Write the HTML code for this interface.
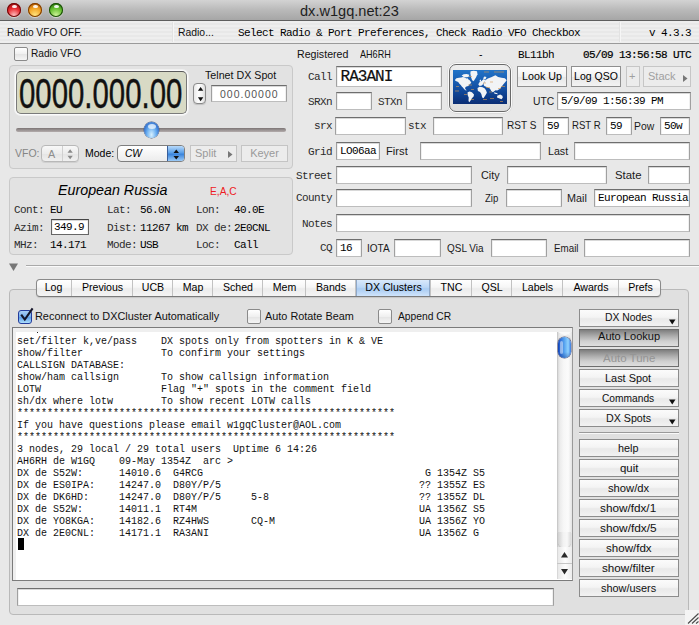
<!DOCTYPE html><html><head><meta charset="utf-8"><style>
*{margin:0;padding:0;box-sizing:border-box}
html,body{width:699px;height:625px;overflow:hidden;background:#e8e8e8;position:relative;font-family:"Liberation Sans",sans-serif;color:#000}
div{position:absolute}
.t{white-space:pre;line-height:14px;font-size:11px}
.m{font-family:"Liberation Mono",monospace;font-size:11px;letter-spacing:-0.6px}
.lbl{color:#2b2b2b}
.fld{background:#fff;border:1px solid #a0a0a0;border-top-color:#6e6e6e;border-bottom-color:#bdbdbd;box-shadow:inset 0 1px 0 #d8d8d8,inset 1px 0 0 #f0f0f0,inset -1px 0 0 #f0f0f0}
.grp{background:#e2e2e2;border:1px solid #c9c9c9;border-radius:4px}
.btn{background:linear-gradient(#ffffff,#f1f1f1 50%,#e6e6e6 51%,#f3f3f3);border:1px solid #8f8f8f;text-align:center}
.sbtn{background:linear-gradient(#fbfbfb,#f4f4f4 45%,#e9e9e9 55%,#f2f2f2);border:1px solid #8c8c8c;text-align:center}
.on{background:linear-gradient(#7e7e7e,#a9a9a9 35%,#cfcfcf 70%,#dedede);border:1px solid #6e6e6e}
.cb{background:linear-gradient(#fff,#f0f0f0 50%,#e4e4e4 51%,#f5f5f5);border:1px solid #8a8a8a;border-radius:2px}
</style></head><body>
<div class="" style="left:0px;top:0px;width:699px;height:21px;background:linear-gradient(#d3d3d3,#b9b9b9 50%,#a6a6a6);border-bottom:1px solid #5e5e5e"></div>
<div style="left:7px;top:3px;width:14px;height:14px;border-radius:50%;background:radial-gradient(circle at 50% 88%,#ffc0c0 0,#e82a30 50%,#a01010 85%);box-shadow:inset 0 0 0 1px #6a0808,0 1px 1px rgba(255,255,255,0.55)"><div style="left:4.5px;top:1.5px;width:5px;height:3.5px;border-radius:50%;background:rgba(255,255,255,0.9)"></div></div>
<div style="left:28px;top:3px;width:14px;height:14px;border-radius:50%;background:radial-gradient(circle at 50% 88%,#ffe680 0,#f3a526 50%,#b65a00 85%);box-shadow:inset 0 0 0 1px #7a3a00,0 1px 1px rgba(255,255,255,0.55)"><div style="left:4.5px;top:1.5px;width:5px;height:3.5px;border-radius:50%;background:rgba(255,255,255,0.9)"></div></div>
<div style="left:49px;top:3px;width:14px;height:14px;border-radius:50%;background:radial-gradient(circle at 50% 88%,#d0f59a 0,#66c030 50%,#2a7a10 85%);box-shadow:inset 0 0 0 1px #1a4a08,0 1px 1px rgba(255,255,255,0.55)"><div style="left:4.5px;top:1.5px;width:5px;height:3.5px;border-radius:50%;background:rgba(255,255,255,0.9)"></div></div>
<div class="t fit" style="left:299.59px;top:1.40px;line-height:20px;font-size:14px;color:#1e1e1e;transform:scaleX(1.0404);transform-origin:0 0;">dx.w1gq.net:23</div>
<div class="" style="left:0px;top:21px;width:699px;height:23px;background:repeating-linear-gradient(#eeeeee 0 2px,#e8e8e8 2px 4px);border-bottom:1px solid #9a9a9a"></div>
<div class="" style="left:172px;top:22px;width:1px;height:20px;background:#e2e2e2;box-shadow:1px 0 0 #f6f6f6"></div>
<div class="" style="left:619px;top:22px;width:1px;height:20px;background:#e2e2e2;box-shadow:1px 0 0 #f6f6f6"></div>
<div class="t fit" style="left:7.26px;top:22.00px;line-height:20px;font-size:10.8px;color:#111;transform:scaleX(0.9410);transform-origin:0 0;">Radio VFO OFF.</div>
<div class="t fit" style="left:177.85px;top:22.40px;line-height:20px;font-size:10.8px;color:#111;transform:scaleX(0.9622);transform-origin:0 0;">Radio...</div>
<div class="t m" style="left:238px;top:26px;">Select Radio &amp; Port Preferences, Check Radio VFO Checkbox</div>
<div class="t m" style="left:649px;top:26px;font-size:11px">v 4.3.3</div>
<div class="cb" style="left:14px;top:47px;width:14px;height:14px;"></div>
<div class="t fit" style="left:31.21px;top:42.90px;line-height:20px;font-size:10.8px;color:#111;transform:scaleX(0.9401);transform-origin:0 0;">Radio VFO</div>
<div class="grp" style="left:9px;top:65px;width:284px;height:104px;"></div>
<div class="" style="left:16px;top:71px;width:171px;height:43px;background:#d8dac5;border:1px solid #7a7a7a;border-top-color:#5a5a5a;border-radius:5px;box-shadow:0 0 0 1px #fbfbfb,0 0 0 2px #f0f0f0;overflow:hidden"><div class="t" style="left:0;top:-3px;font-size:42.5px;line-height:50px;transform:scaleX(0.691);transform-origin:0 0;color:#111;left:1.5px;-webkit-text-stroke:0.45px #111">0000.000.00</div></div>
<div class="t fit" style="left:205.11px;top:64.70px;line-height:20px;font-size:10.8px;color:#111;transform:scaleX(0.9891);transform-origin:0 0;">Telnet DX Spot</div>
<div class="" style="left:193px;top:83px;width:13px;height:21px;background:linear-gradient(90deg,#e8e8e8,#fdfdfd 40%,#f4f4f4 70%,#dcdcdc);border:1px solid #8a8a8a;border-radius:4px;box-shadow:0 1px 1px rgba(0,0,0,0.15)"><svg style="position:absolute;left:3px;top:2px" width="7" height="16"><path d="M0.9 4.7 L6.3 4.7 L3.6 0.9 Z M0.9 11.2 L6.3 11.2 L3.6 15.3 Z" fill="#111"/></svg></div>
<div class="fld" style="left:211px;top:85px;width:76px;height:17px;"><div class="t" style="left:8px;top:1px;font-size:10.5px;letter-spacing:1px;color:#555">000.00000</div></div>
<div class="" style="left:16px;top:128px;width:270px;height:4px;background:linear-gradient(#7d7575,#b3acac);border-radius:2px"></div>
<div class="" style="left:144px;top:122px;width:15px;height:16px;border-radius:50%;background:radial-gradient(ellipse at 50% 80%,#d6f0ff,#6aaef0 45%,#2a67c8 80%,#1a3f90 100%);box-shadow:0 0 0 0.5px #4a5a7a"><div style="left:3.5px;top:1.5px;width:8px;height:5px;border-radius:50%;background:rgba(255,255,255,0.7)"></div></div>
<div class="t " style="left:15px;top:146px;color:#858585;font-size:10.5px">VFO:</div>
<div class="" style="left:41px;top:145px;width:38px;height:17px;border:1px solid #b8b8b8;border-radius:4px;background:linear-gradient(#f8f8f8,#ececec 50%,#e4e4e4 51%,#f0f0f0);box-shadow:0 1px 0 rgba(0,0,0,0.08)"><div class="t" style="left:6px;top:0.5px;color:#8e8e8e;font-size:10.8px">A</div><div style="left:20px;top:0;width:1px;height:15px;background:#d0d0d0"></div><svg style="position:absolute;left:24.5px;top:2.5px" width="7" height="11"><path d="M0.5 3.8 L5.8 3.8 L3.15 0.3 Z M0.5 6.8 L5.8 6.8 L3.15 10.3 Z" fill="#8a8a8a"/></svg></div>
<div class="t " style="left:85px;top:146px;font-size:10.5px">Mode:</div>
<div class="" style="left:117px;top:145px;width:68px;height:17px;border:1px solid #7f7f7f;border-radius:4px;background:linear-gradient(#fff,#ececec);overflow:hidden"><div class="t" style="left:7px;top:1px;font-style:italic;font-size:10.2px">CW</div><div style="left:49px;top:-1px;width:19px;height:17px;border:1px solid #3a5f9a;border-radius:0 4px 4px 0;background:linear-gradient(#b8dafb,#5a9fe8 45%,#3a84dc 55%,#9ccbf7)"></div><svg style="position:absolute;left:55px;top:2.5px" width="7" height="11"><path d="M0.5 4 L6 4 L3.25 0.5 Z M0.5 7 L6 7 L3.25 10.5 Z" fill="#111"/></svg></div>
<div class="" style="left:190px;top:145px;width:47px;height:17px;border:1px solid #c4c4c4;background:#ececec"><div class="t" style="left:4px;top:0px;color:#9a9a9a;font-size:11px">Split</div><svg style="position:absolute;left:37px;top:5px" width="5" height="7"><path d="M0 0 L4.5 3.5 L0 7 Z" fill="#777"/></svg></div>
<div class="" style="left:241px;top:145px;width:47px;height:17px;border:1px solid #c4c4c4;background:#ececec"><div class="t" style="left:0;width:45px;text-align:center;top:0px;color:#9a9a9a;font-size:11px">Keyer</div></div>
<div class="grp" style="left:9px;top:177px;width:284px;height:78px;"></div>
<div class="t fit" style="left:58.40px;top:180.30px;line-height:20px;font-size:14.2px;color:#000;transform:scaleX(1.0056);transform-origin:0 0;font-style:italic">European Russia</div>
<div class="t fit" style="left:210.04px;top:181.40px;line-height:20px;font-size:10.8px;color:#ee1b24;transform:scaleX(0.9473);transform-origin:0 0;">E,A,C</div>
<div class="t m lbl" style="left:14px;top:202.5px;">Cont:</div>
<div class="t m " style="left:50px;top:202.5px;">EU</div>
<div class="t m lbl" style="left:107px;top:202.5px;">Lat:</div>
<div class="t m " style="left:140px;top:202.5px;">56.0N</div>
<div class="t m lbl" style="left:196px;top:202.5px;">Lon:</div>
<div class="t m " style="left:234px;top:202.5px;">40.0E</div>
<div class="t m lbl" style="left:14px;top:221px;">Azim:</div>
<div class="t m lbl" style="left:107px;top:221px;">Dist:</div>
<div class="t m " style="left:140px;top:221px;">11267 km</div>
<div class="t m lbl" style="left:196px;top:221px;">DX de:</div>
<div class="t m " style="left:234px;top:221px;">2E0CNL</div>
<div class="t m lbl" style="left:14px;top:237.5px;">MHz:</div>
<div class="t m " style="left:50px;top:237.5px;">14.171</div>
<div class="t m lbl" style="left:107px;top:237.5px;">Mode:</div>
<div class="t m " style="left:140px;top:237.5px;">USB</div>
<div class="t m lbl" style="left:196px;top:237.5px;">Loc:</div>
<div class="t m " style="left:234px;top:237.5px;">Call</div>
<div class="fld" style="left:51px;top:219px;width:38px;height:16px;border-color:#666;border-top-color:#444"><div class="t m" style="left:2px;top:1px;line-height:13px">349.9</div></div>
<svg style="position:absolute;left:9px;top:263px" width="10" height="9"><path d="M0 0.5 L9 0.5 L4.5 8 Z" fill="#777"/></svg>
<div class="" style="left:26px;top:265px;width:673px;height:1px;background:#a9a9a9;border-bottom:1px solid #fafafa;height:2px"></div>
<div class="t fit" style="left:297.31px;top:44.10px;line-height:20px;font-size:10.8px;color:#111;transform:scaleX(0.9847);transform-origin:0 0;">Registered</div>
<div class="t fit" style="left:360.15px;top:44.30px;line-height:20px;font-size:10.8px;color:#111;transform:scaleX(0.8393);transform-origin:0 0;">AH6RH</div>
<div class="t " style="left:479px;top:47px;font-size:10.5px">-</div>
<div class="t m" style="left:518px;top:48px;">BL11bh</div>
<div class="t m" style="left:583px;top:48px;-webkit-text-stroke:0.2px #000">05/09 13:56:58 UTC</div>
<div class="t m lbl" style="right:367px;top:70px;">Call</div>
<div class="fld" style="left:336px;top:66px;width:106px;height:21px;"><div class="t m" style="left:3px;top:2px;font-size:16px;letter-spacing:-0.95px;-webkit-text-stroke:0.2px #000;line-height:19px;top:1px;left:3.5px;color:#111">RA3ANI</div></div>
<div class="" style="left:448px;top:63px;width:64px;height:50px;border-radius:8px;background:#fafafa;box-shadow:0 0 0 0.5px #d0d0d0"><div style="left:1px;top:1px;width:62px;height:48px;border:1px solid #6a6a6a;border-radius:7px;background:linear-gradient(#eeeeee,#dedede)"></div></div>
<svg style="position:absolute;left:453px;top:70px" width="54" height="34" viewBox="0 0 54 34">
<defs><linearGradient id="oc" x1="0" y1="0" x2="0" y2="1"><stop offset="0" stop-color="#2274c8"/><stop offset="0.5" stop-color="#1452a6"/><stop offset="1" stop-color="#0a2d74"/></linearGradient></defs>
<rect width="54" height="34" fill="url(#oc)"/>
<g fill="#f2f4f6">
<path d="M2.2 9.4 L3.4 8.2 L6.0 7.7 L8.2 7.6 L9.9 7.0 L12.0 7.6 L13.3 8.6 L14.6 8.2 L15.5 9.4 L16.7 10.3 L18.3 12.5 L17.4 13.7 L16.3 14.6 L15.5 15.9 L14.2 16.3 L12.9 16.7 L12.0 18.0 L12.5 19.3 L13.7 20.2 L12.9 20.6 L11.2 19.3 L9.9 17.6 L9.0 16.7 L7.7 15.0 L6.4 13.7 L5.2 12.0 L3.4 11.2 L2.2 10.7 Z"/>
<path d="M8.6 5.6 L10.7 4.3 L13.7 3.9 L16.3 4.7 L15.5 6.9 L13.3 7.3 L10.7 6.9 Z"/>
<path d="M17.6 1.3 L20.6 0.7 L24.0 1.3 L24.5 4.3 L22.8 7.7 L20.6 11.2 L19.1 10.3 L18.0 6.9 L17.4 3.4 Z"/>
<path d="M14.6 22.3 L16.7 21.5 L18.9 22.3 L21.0 24.5 L20.6 26.6 L18.9 28.3 L17.6 30.5 L16.3 32.2 L15.5 30.9 L15.7 27.5 L14.6 24.9 Z"/>
<path d="M25.3 14.6 L26.2 12.5 L28.3 11.2 L29.6 9.9 L30.9 9.0 L32.2 10.3 L31.3 12.5 L30.0 14.2 L28.8 15.5 L26.6 15.9 Z"/>
<path d="M26.6 10.3 L27.9 9.4 L28.1 11.6 L26.9 12.0 Z"/>
<path d="M30.0 8.6 L31.3 6.4 L33.5 7.0 L32.4 9.4 Z"/>
<path d="M32.2 10.3 L34.8 8.6 L38.2 7.3 L40.8 6.0 L42.5 5.2 L45.1 6.9 L48.5 7.7 L51.9 8.2 L53.7 10.3 L51.9 12.5 L50.2 14.6 L48.5 16.7 L46.8 18.9 L44.2 20.6 L42.5 20.2 L39.9 22.3 L38.2 21.0 L36.9 18.5 L34.8 17.6 L33.1 16.7 L31.3 15.9 L30.5 14.6 Z"/>
<path d="M24.5 18.0 L26.6 16.7 L29.6 17.2 L31.8 18.5 L33.1 20.6 L33.9 22.8 L32.6 24.9 L31.3 27.0 L30.5 28.3 L29.2 27.5 L28.3 24.0 L27.0 21.9 L24.9 21.0 Z"/>
<path d="M40.8 22.3 L43.8 23.0 L45.2 24.2 L41.6 23.7 Z"/>
<path d="M44.2 25.8 L47.2 24.5 L49.4 25.8 L49.8 27.5 L48.5 29.2 L45.9 28.3 L44.0 27.5 Z"/>
</g>
<g fill="#d89a50" opacity="0.6">
<rect x="3" y="16" width="3" height="1"/><rect x="2" y="20.5" width="4" height="1"/><rect x="11" y="24" width="3" height="1"/><rect x="18" y="29" width="3" height="1"/>
<rect x="15" y="14.5" width="4" height="1"/><rect x="18" y="19" width="3" height="1"/><rect x="30" y="12.5" width="3" height="1"/><rect x="37" y="11.5" width="3" height="1"/>
<rect x="33" y="17" width="4" height="1"/><rect x="36" y="21.5" width="3" height="1"/><rect x="45" y="18" width="3" height="1"/><rect x="48" y="16" width="4" height="1"/>
<rect x="30" y="29" width="4" height="1"/><rect x="37" y="28" width="4" height="1"/><rect x="47" y="31" width="3" height="1"/><rect x="31" y="1.5" width="5" height="1"/><rect x="41" y="1.5" width="10" height="1"/><rect x="16" y="6" width="3" height="1"/>
</g>
</svg>
<div class="btn" style="left:517px;top:66px;width:50px;height:21px"><div class="t" style="left:0;width:48px;top:2px;font-size:10.7px">Look Up</div></div>
<div class="btn" style="left:571px;top:66px;width:50px;height:21px"><div class="t" style="left:0;width:48px;top:2px;font-size:10.5px">Log QSO</div></div>
<div style="left:626px;top:66px;width:14px;height:21px;border:1px solid #c6c6c6;background:#ececec"><div class="t" style="left:2px;top:2px;color:#a0a0a0;font-size:11px">+</div></div>
<div style="left:643px;top:66px;width:48px;height:21px;border:1px solid #c6c6c6;background:#ececec"><div class="t" style="left:4px;top:2px;color:#a0a0a0;font-size:11px">Stack</div><svg style="position:absolute;left:39px;top:8px" width="5" height="7"><path d="M0 0 L4.5 3.5 L0 7 Z" fill="#777"/></svg></div>
<div class="t m lbl" style="right:367px;top:95px;">SRXn</div>
<div class="fld" style="left:336px;top:92px;width:36px;height:18px;"></div>
<div class="t m lbl" style="right:297px;top:95px;">STXn</div>
<div class="fld" style="left:406px;top:92px;width:36px;height:18px;"></div>
<div class="t fit" style="left:533.44px;top:91.30px;line-height:20px;font-size:11px;color:#1a1a1a;transform:scaleX(0.9361);transform-origin:0 0;">UTC</div>
<div class="fld" style="left:557px;top:92px;width:134px;height:18px;"><div class="t m" style="left:3px;top:1px;">5/9/09 1:56:39 PM</div></div>
<div class="t m lbl" style="right:367px;top:119px;">srx</div>
<div class="fld" style="left:335px;top:117px;width:71px;height:18px;"></div>
<div class="t m lbl" style="right:273px;top:119px;">stx</div>
<div class="fld" style="left:433px;top:117px;width:70px;height:18px;"></div>
<div class="t fit" style="left:506.80px;top:115.40px;line-height:20px;font-size:10.8px;color:#1a1a1a;transform:scaleX(0.9279);transform-origin:0 0;">RST S</div>
<div class="fld" style="left:543px;top:117px;width:26px;height:18px;"><div class="t m" style="left:3px;top:1px;">59</div></div>
<div class="t fit" style="left:571.84px;top:115.40px;line-height:20px;font-size:10.8px;color:#1a1a1a;transform:scaleX(0.8886);transform-origin:0 0;">RST R</div>
<div class="fld" style="left:606px;top:117px;width:26px;height:18px;"><div class="t m" style="left:3px;top:1px;">59</div></div>
<div class="t fit" style="left:634.17px;top:115.70px;line-height:20px;font-size:10.8px;color:#1a1a1a;transform:scaleX(0.9612);transform-origin:0 0;">Pow</div>
<div class="fld" style="left:660px;top:117px;width:30px;height:18px;"><div class="t m" style="left:3px;top:1px;">50w</div></div>
<div class="t m lbl" style="right:367px;top:145px;">Grid</div>
<div class="fld" style="left:336px;top:142px;width:44px;height:18px;"><div class="t m" style="left:3px;top:1px;">LO06aa</div></div>
<div class="t fit" style="left:385.75px;top:140.90px;line-height:20px;font-size:10.8px;color:#1a1a1a;transform:scaleX(1.0376);transform-origin:0 0;">First</div>
<div class="fld" style="left:420px;top:142px;width:121px;height:18px;"></div>
<div class="t fit" style="left:548.21px;top:141.10px;line-height:20px;font-size:10.8px;color:#1a1a1a;transform:scaleX(0.9877);transform-origin:0 0;">Last</div>
<div class="fld" style="left:574px;top:142px;width:116px;height:18px;"></div>
<div class="t m lbl" style="right:367px;top:169px;">Street</div>
<div class="fld" style="left:336px;top:166px;width:136px;height:18px;"></div>
<div class="t fit" style="left:481.35px;top:164.90px;line-height:20px;font-size:10.8px;color:#1a1a1a;transform:scaleX(1.0028);transform-origin:0 0;">City</div>
<div class="fld" style="left:507px;top:166px;width:100px;height:18px;"></div>
<div class="t fit" style="left:614.97px;top:164.60px;line-height:20px;font-size:10.8px;color:#1a1a1a;transform:scaleX(1.0513);transform-origin:0 0;">State</div>
<div class="fld" style="left:648px;top:166px;width:42px;height:18px;"></div>
<div class="t m lbl" style="right:367px;top:191px;">County</div>
<div class="fld" style="left:336px;top:189px;width:136px;height:18px;"></div>
<div class="t fit" style="left:484.62px;top:187.90px;line-height:20px;font-size:10.8px;color:#1a1a1a;transform:scaleX(0.8873);transform-origin:0 0;">Zip</div>
<div class="fld" style="left:506px;top:189px;width:56px;height:18px;"></div>
<div class="t fit" style="left:566.78px;top:187.90px;line-height:20px;font-size:10.8px;color:#1a1a1a;transform:scaleX(0.9990);transform-origin:0 0;">Mail</div>
<div class="fld" style="left:594px;top:189px;width:96px;height:18px;"><div class="t m" style="left:3px;top:1px;">European Russia</div></div>
<div class="t m lbl" style="right:367px;top:217px;">Notes</div>
<div class="fld" style="left:336px;top:214px;width:354px;height:18px;"></div>
<div class="t m lbl" style="right:367px;top:241px;">CQ</div>
<div class="fld" style="left:336px;top:239px;width:26px;height:18px;"><div class="t m" style="left:3px;top:1px;">16</div></div>
<div class="t fit" style="left:367.47px;top:238.40px;line-height:20px;font-size:10.8px;color:#1a1a1a;transform:scaleX(0.9293);transform-origin:0 0;">IOTA</div>
<div class="fld" style="left:394px;top:239px;width:47px;height:18px;"></div>
<div class="t fit" style="left:447.41px;top:238.40px;line-height:20px;font-size:10.8px;color:#1a1a1a;transform:scaleX(0.9228);transform-origin:0 0;">QSL Via</div>
<div class="fld" style="left:491px;top:239px;width:56px;height:18px;"></div>
<div class="t fit" style="left:553.66px;top:238.40px;line-height:20px;font-size:10.8px;color:#1a1a1a;transform:scaleX(0.9066);transform-origin:0 0;">Email</div>
<div class="fld" style="left:584px;top:239px;width:106px;height:18px;"></div>
<div class="" style="left:9px;top:289px;width:680px;height:326px;background:#e0e0e0;border:1px solid #b9b9b9;border-radius:4px"></div>
<div style="left:36px;top:279px;width:625px;height:18px;border:1px solid #8a8a8a;border-bottom-color:#7a7a7a;border-radius:4px;background:linear-gradient(#ffffff,#f6f6f6 45%,#ececec 55%,#f4f4f4);box-shadow:0 1px 1px rgba(0,0,0,0.12);overflow:hidden"></div>
<div style="left:36px;top:280px;width:35px;height:16px;"><div class="t" style="left:0;width:35px;text-align:center;top:0px;font-size:10.6px">Log</div></div>
<div style="left:71px;top:280px;width:61px;height:16px;border-left:1px solid #c2c2c2;"><div class="t" style="left:0;width:61px;text-align:center;top:0px;font-size:10.6px">Previous</div></div>
<div style="left:132px;top:280px;width:40px;height:16px;border-left:1px solid #c2c2c2;"><div class="t" style="left:0;width:40px;text-align:center;top:0px;font-size:10.6px">UCB</div></div>
<div style="left:172px;top:280px;width:40px;height:16px;border-left:1px solid #c2c2c2;"><div class="t" style="left:0;width:40px;text-align:center;top:0px;font-size:10.6px">Map</div></div>
<div style="left:212px;top:280px;width:50px;height:16px;border-left:1px solid #c2c2c2;"><div class="t" style="left:0;width:50px;text-align:center;top:0px;font-size:10.6px">Sched</div></div>
<div style="left:262px;top:280px;width:43px;height:16px;border-left:1px solid #c2c2c2;"><div class="t" style="left:0;width:43px;text-align:center;top:0px;font-size:10.6px">Mem</div></div>
<div style="left:305px;top:280px;width:50px;height:16px;border-left:1px solid #c2c2c2;"><div class="t" style="left:0;width:50px;text-align:center;top:0px;font-size:10.6px">Bands</div></div>
<div style="left:355px;top:280px;width:75px;height:16px;background:linear-gradient(#d9e9fb,#bcd7f6 45%,#a9cbf1 55%,#cfe4fb);box-shadow:inset 1px 0 0 #8fa8c8,inset -1px 0 0 #8fa8c8;border-left:1px solid #c2c2c2;"><div class="t" style="left:0;width:75px;text-align:center;top:0px;font-size:10.6px">DX Clusters</div></div>
<div style="left:430px;top:280px;width:41px;height:16px;border-left:1px solid #c2c2c2;"><div class="t" style="left:0;width:41px;text-align:center;top:0px;font-size:10.6px">TNC</div></div>
<div style="left:471px;top:280px;width:40px;height:16px;border-left:1px solid #c2c2c2;"><div class="t" style="left:0;width:40px;text-align:center;top:0px;font-size:10.6px">QSL</div></div>
<div style="left:511px;top:280px;width:51px;height:16px;border-left:1px solid #c2c2c2;"><div class="t" style="left:0;width:51px;text-align:center;top:0px;font-size:10.6px">Labels</div></div>
<div style="left:562px;top:280px;width:56px;height:16px;border-left:1px solid #c2c2c2;"><div class="t" style="left:0;width:56px;text-align:center;top:0px;font-size:10.6px">Awards</div></div>
<div style="left:618px;top:280px;width:43px;height:16px;border-left:1px solid #c2c2c2;"><div class="t" style="left:0;width:43px;text-align:center;top:0px;font-size:10.6px">Prefs</div></div>
<div class="cb" style="left:18px;top:310px;width:14px;height:14px;background:linear-gradient(#a9cdf5,#7ab2ee 45%,#5e9ee8 55%,#aee0fd);border-color:#233c9c;border-radius:3px"></div>
<svg style="position:absolute;left:18px;top:306px" width="17" height="17"><path d="M3.2 8.6 L6.8 13.5 L14.6 2.4" stroke="#15152a" stroke-width="2.1" fill="none"/></svg>
<div class="t fit" style="left:35.09px;top:306.40px;line-height:20px;font-size:10.8px;color:#111;transform:scaleX(1.0099);transform-origin:0 0;">Reconnect to DXCluster Automatically</div>
<div class="cb" style="left:247px;top:309px;width:14px;height:15px;"></div>
<div class="t fit" style="left:265.00px;top:306.40px;line-height:20px;font-size:10.8px;color:#111;transform:scaleX(1.0069);transform-origin:0 0;">Auto Rotate Beam</div>
<div class="cb" style="left:378px;top:309px;width:14px;height:15px;"></div>
<div class="t fit" style="left:397.90px;top:305.80px;line-height:20px;font-size:10.8px;color:#111;transform:scaleX(0.9530);transform-origin:0 0;">Append CR</div>
<div class="" style="left:12px;top:327px;width:561px;height:254px;background:#fff;border:1px solid #7b7b7b;border-right-color:#9a9a9a;box-shadow:inset 3px 4px 0 #efefef"></div>
<div class="t m" style="left:17px;top:336px;line-height:12px;color:#111;font-size:10px;letter-spacing:0">set/filter k,ve/pass    DX spots only from spotters in K &amp; VE
show/filter             To confirm your settings
CALLSIGN DATABASE:
show/ham callsign       To show callsign information
LOTW                    Flag "+" spots in the comment field
sh/dx where lotw        To show recent LOTW calls
***************************************************************
If you have questions please email w1gqCluster@AOL.com
***************************************************************
3 nodes, 29 local / 29 total users  Uptime 6 14:26
AH6RH de W1GQ    09-May 1354Z  arc &gt;
DX de S52W:      14010.6  G4RCG                                     G 1354Z S5
DX de ES0IPA:    14247.0  D80Y/P/5                                 ?? 1355Z ES
DX de DK6HD:     14247.0  D80Y/P/5     5-8                         ?? 1355Z DL
DX de S52W:      14011.1  RT4M                                     UA 1356Z S5
DX de YO8KGA:    14182.6  RZ4HWS       CQ-M                        UA 1356Z YO
DX de 2E0CNL:    14171.1  RA3ANI                                   UA 1356Z G</div>
<div class="" style="left:18px;top:538px;width:6px;height:12px;background:#000"></div>
<div class="" style="left:37px;top:332px;width:1px;height:1px;background:#222"></div>
<div class="" style="left:557px;top:332px;width:15px;height:247px;background:linear-gradient(90deg,#b9b9b9 0,#d9d9d9 1px,#ececec 3px,#f7f7f7 45%,#fbfbfb 75%,#e4e4e4 100%)"></div>
<div class="" style="left:558px;top:333px;width:13px;height:8px;border-radius:6px 6px 0 0;background:linear-gradient(#f8f8f8,#e0e0e0 60%,#b8b8b8)"></div>
<svg style="position:absolute;left:558px;top:332px" width="13" height="4"><path d="M0 0 L13 0 L7 3.5 Z" fill="#fafafa"/></svg>
<div class="" style="left:558px;top:337px;width:13px;height:21px;border-radius:6.5px;background:linear-gradient(90deg,#0f3fb5 0,#2f6fd8 18%,#5aa6f0 50%,#8fd2ff 78%,#3a7be0 100%);box-shadow:0 0 0 0.5px #5a5a7a"><div style="left:2px;top:4px;width:3px;height:13px;border-radius:2px;background:rgba(255,255,255,0.45)"></div><div style="left:0;top:15px;width:13px;height:6px;border-radius:0 0 6px 6px;background:linear-gradient(rgba(0,30,120,0),rgba(0,30,120,0.35))"></div></div>
<div class="" style="left:558px;top:532px;width:13px;height:16px;border-radius:0 0 7px 7px;background:linear-gradient(90deg,#cfcfcf,#f2f2f2 40%,#f8f8f8 70%,#dadada);box-shadow:0 1px 1px rgba(0,0,0,0.25)"></div>
<div class="" style="left:557px;top:547px;width:15px;height:32px;background:linear-gradient(90deg,#c8c8c8 0,#e8e8e8 1px,#f7f7f7 40%,#fdfdfd 55%,#ececec 100%)"><svg style="position:absolute;left:4px;top:5px" width="8" height="6"><path d="M0 5.5 L7 5.5 L3.5 0 Z" fill="#2a2a2a"/></svg><div style="left:0;top:16px;width:15px;height:1px;background:#c6c6c6"></div><svg style="position:absolute;left:4px;top:22px" width="8" height="6"><path d="M0 0 L7 0 L3.5 5.5 Z" fill="#2a2a2a"/></svg></div>
<div class="fld" style="left:17px;top:588px;width:537px;height:18px;"></div>
<div class="sbtn" style="left:579px;top:309px;width:100px;height:18px"><svg style="position:absolute;left:89px;top:9px" width="7" height="6"><path d="M0 0.5 L6.5 0.5 L3.25 5.5 Z" fill="#111"/></svg></div>
<div class="t fit" style="left:605.42px;top:306.70px;line-height:20px;font-size:10.8px;color:#111;transform:scaleX(0.9596);transform-origin:0 0;">DX Nodes</div>
<div class="sbtn on" style="left:579px;top:329px;width:100px;height:18px"></div>
<div class="t fit" style="left:598.39px;top:326.30px;line-height:20px;font-size:10.8px;color:#111;transform:scaleX(1.0251);transform-origin:0 0;">Auto Lookup</div>
<div class="sbtn on" style="left:579px;top:349px;width:100px;height:18px"></div>
<div class="t fit" style="left:602.93px;top:347.70px;line-height:20px;font-size:10.8px;color:#959595;transform:scaleX(1.0627);transform-origin:0 0;">Auto Tune</div>
<div class="sbtn" style="left:579px;top:369px;width:100px;height:18px"></div>
<div class="t fit" style="left:605.19px;top:367.50px;line-height:20px;font-size:10.8px;color:#111;transform:scaleX(1.0113);transform-origin:0 0;">Last Spot</div>
<div class="sbtn" style="left:579px;top:389px;width:100px;height:18px"><svg style="position:absolute;left:89px;top:9px" width="7" height="6"><path d="M0 0.5 L6.5 0.5 L3.25 5.5 Z" fill="#111"/></svg></div>
<div class="t fit" style="left:602.40px;top:387.50px;line-height:20px;font-size:10.8px;color:#111;transform:scaleX(0.9457);transform-origin:0 0;">Commands</div>
<div class="sbtn" style="left:579px;top:409px;width:100px;height:18px"><svg style="position:absolute;left:89px;top:9px" width="7" height="6"><path d="M0 0.5 L6.5 0.5 L3.25 5.5 Z" fill="#111"/></svg></div>
<div class="t fit" style="left:605.81px;top:407.50px;line-height:20px;font-size:10.8px;color:#111;transform:scaleX(0.9892);transform-origin:0 0;">DX Spots</div>
<div class="" style="left:579px;top:432px;width:100px;height:2px;background:#9a9a9a;border-bottom:1px solid #f8f8f8"></div>
<div class="sbtn" style="left:579px;top:439px;width:100px;height:18px"></div>
<div class="t fit" style="left:618.18px;top:437.50px;line-height:20px;font-size:10.8px;color:#111;transform:scaleX(1.0016);transform-origin:0 0;">help</div>
<div class="sbtn" style="left:579px;top:459px;width:100px;height:18px"></div>
<div class="t fit" style="left:620.14px;top:457.90px;line-height:20px;font-size:10.8px;color:#111;transform:scaleX(1.0601);transform-origin:0 0;">quit</div>
<div class="sbtn" style="left:579px;top:479px;width:100px;height:18px"></div>
<div class="t fit" style="left:608.18px;top:477.50px;line-height:20px;font-size:10.8px;color:#111;transform:scaleX(1.0388);transform-origin:0 0;">show/dx</div>
<div class="sbtn" style="left:579px;top:499px;width:100px;height:18px"></div>
<div class="t fit" style="left:600.39px;top:497.50px;line-height:20px;font-size:10.8px;color:#111;transform:scaleX(1.0884);transform-origin:0 0;">show/fdx/1</div>
<div class="sbtn" style="left:579px;top:519px;width:100px;height:18px"></div>
<div class="t fit" style="left:600.39px;top:517.70px;line-height:20px;font-size:10.8px;color:#111;transform:scaleX(1.0982);transform-origin:0 0;">show/fdx/5</div>
<div class="sbtn" style="left:579px;top:539px;width:100px;height:18px"></div>
<div class="t fit" style="left:606.39px;top:537.50px;line-height:20px;font-size:10.8px;color:#111;transform:scaleX(1.0714);transform-origin:0 0;">show/fdx</div>
<div class="sbtn" style="left:579px;top:559px;width:100px;height:18px"></div>
<div class="t fit" style="left:602.40px;top:557.50px;line-height:20px;font-size:10.8px;color:#111;transform:scaleX(1.0819);transform-origin:0 0;">show/filter</div>
<div class="sbtn" style="left:579px;top:579px;width:100px;height:18px"></div>
<div class="t fit" style="left:601.38px;top:577.50px;line-height:20px;font-size:10.8px;color:#111;transform:scaleX(1.0096);transform-origin:0 0;">show/users</div>
<div class="" style="left:685px;top:610px;width:14px;height:15px;background:#f4f4f4"></div>
<svg style="position:absolute;left:685px;top:610px" width="14" height="15"><path d="M3 13.5 L13.5 3.5 M7 13.5 L13.5 7.5 M11 13.5 L13.5 11.5" stroke="#4a4a4a" stroke-width="1.1"/></svg>
</body></html>
